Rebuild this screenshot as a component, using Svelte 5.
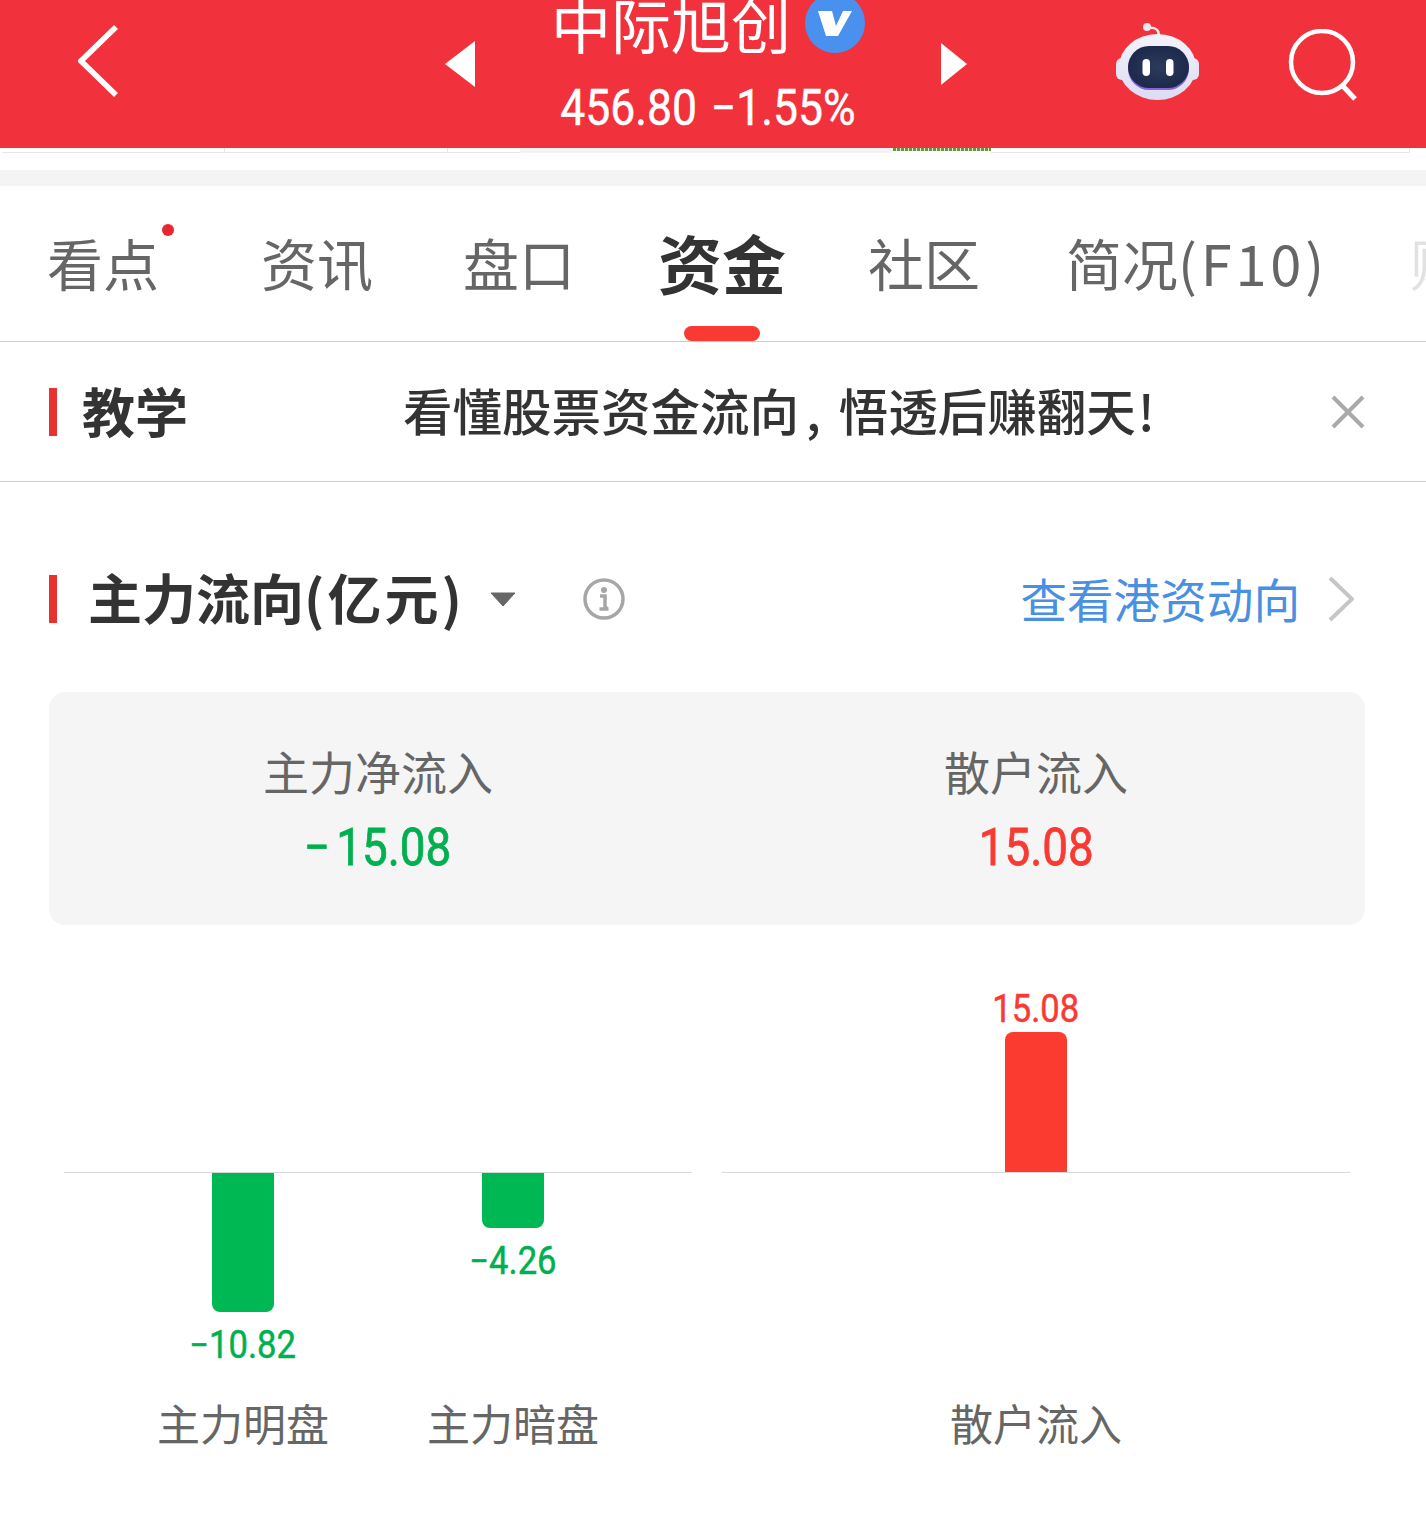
<script>
  const tabs = [
    { label: "看点", dot: true },
    { label: "资讯" },
    { label: "盘口" },
    { label: "资金", active: true },
    { label: "社区" },
    { label: "简况", suffix: "(F10)" },
    { label: "财", faded: true }
  ];

  const summary = [
    { label: "主力净流入", sign: "−", value: "15.08", tone: "down" },
    { label: "散户流入", value: "15.08", tone: "up" }
  ];

  const mainBars = [
    { name: "主力明盘", value: "−10.82", height: 139 },
    { name: "主力暗盘", value: "−4.26", height: 55 }
  ];
</script>

<div class="page">
  <header class="topbar">
    <svg class="back" viewBox="0 0 40 72" width="40" height="72">
      <path d="M38 2 L3 36 L38 70" fill="none" stroke="#fff" stroke-width="5.500" />
    </svg>
    <svg class="tri" viewBox="0 0 30 46" width="30" height="46"><path d="M30 0V46L0 23Z" fill="#fff" /></svg>
    <div class="stock">
      <div class="stock-name">
        <span>中际旭创</span>
        <svg viewBox="0 0 60 60" width="60" height="60">
          <circle cx="30" cy="30" r="30" fill="#4a90ee" />
          <path d="M13 18h14l4 15 7-15h9L33 43H21Z" fill="#fff" />
        </svg>
      </div>
      <div class="stock-quote">456.80 <span class="minus">−</span>1.55%</div>
    </div>
    <svg class="tri" viewBox="0 0 26 42" width="26" height="42"><path d="M0 0V42L26 21Z" fill="#fff" /></svg>
    <div class="actions">
      <svg viewBox="0 0 84 78" width="84" height="78">
        <defs>
          <linearGradient id="shell" x1="0" y1="0" x2="0" y2="1">
            <stop offset="0" stop-color="#f4f3fb" />
            <stop offset="1" stop-color="#dcdcf2" />
          </linearGradient>
          <radialGradient id="face">
            <stop offset="0" stop-color="#2c3a5c" />
            <stop offset="1" stop-color="#1e2a4c" />
          </radialGradient>
        </defs>
        <path d="M32 5 C40 4 43 7 43 13" fill="none" stroke="#f3e6ea" stroke-width="2.500" />
        <circle cx="31" cy="4" r="4" fill="#f0e6ee" />
        <rect x="0" y="35" width="83" height="22" rx="6" fill="#e4e4f4" />
        <ellipse cx="41.500" cy="44" rx="38.500" ry="33" fill="url(#shell)" />
        <rect x="12" y="25" width="61" height="42" rx="21" fill="#8a63d8" />
        <rect x="12" y="23" width="61" height="42" rx="21" fill="url(#face)" />
        <rect x="26.500" y="36" width="7.500" height="17" rx="3.700" fill="#fff" />
        <rect x="50" y="36" width="7.500" height="17" rx="3.700" fill="#fff" />
      </svg>
      <svg class="search" viewBox="0 0 72 72" width="72" height="72">
        <circle cx="34" cy="33" r="31" fill="none" stroke="#fff" stroke-width="4.500" />
        <path d="M54 56 L67 70" fill="none" stroke="#fff" stroke-width="5" />
      </svg>
    </div>
  </header>

  <div class="peek">
    <div class="peek-a"></div>
    <div class="peek-b"></div>
    <div class="peek-ticks"></div>
    <div class="peek-c"></div>
  </div>

  <div class="band"></div>

  <nav class="tabs">
    {#each tabs as tab}
      <div class="tab" class:active={tab.active} class:faded={tab.faded}>
        <span class="tab-label">
          {tab.label}{#if tab.suffix}<span class="suffix">{tab.suffix}</span>{/if}
          {#if tab.dot}<i class="dot"></i>{/if}
        </span>
        {#if tab.active}<i class="marker"></i>{/if}
      </div>
    {/each}
  </nav>

  <section class="lesson">
    <i class="accent"></i>
    <strong>教学</strong>
    <p>看懂股票资金流向<span class="comma">,</span>悟透后赚翻天<span class="bang">!</span></p>
    <svg viewBox="0 0 34 34" width="34" height="34">
      <path d="M2 2 L32 32 M32 2 L2 32" fill="none" stroke="#aaa" stroke-width="4" />
    </svg>
  </section>

  <section class="flow">
    <div class="flow-head">
      <i class="accent"></i>
      <h2>主力流向<span class="unit">(亿元)</span></h2>
      <svg class="caret" viewBox="0 0 26 14" width="26" height="14"><path d="M1 1H25L13 14Z" fill="#666" stroke="#666" stroke-linejoin="round" /></svg>
      <svg class="info" viewBox="0 0 42 42" width="42" height="42">
        <circle cx="21" cy="21" r="19" fill="none" stroke="#a6a6a6" stroke-width="3.500" />
        <circle cx="21" cy="12" r="3" fill="#a6a6a6" />
        <path d="M17 18h5v12h2.500M16.500 31h9" fill="none" stroke="#a6a6a6" stroke-width="3.500" />
      </svg>
      <a class="hk-link" href="#hk">查看港资动向</a>
      <svg class="more" viewBox="0 0 26 46" width="26" height="46">
        <path d="M2 2 L24 23 L2 44" fill="none" stroke="#c6c6c6" stroke-width="4" />
      </svg>
    </div>

    <div class="summary">
      {#each summary as item}
        <div class="summary-cell">
          <span>{item.label}</span>
          <b class={item.tone}>{#if item.sign}<span class="sign">{item.sign}</span>{/if}{item.value}</b>
        </div>
      {/each}
    </div>

    <div class="charts">
      <div class="chart">
        <div class="above"></div>
        <div class="axis"></div>
        <div class="below">
          {#each mainBars as bar}
            <div class="col">
              <i class="bar down-bar" style="height: {bar.height}px"></i>
              <em class="down">{bar.value}</em>
            </div>
          {/each}
        </div>
        <div class="names">
          {#each mainBars as bar}
            <span class="name">{bar.name}</span>
          {/each}
        </div>
      </div>
      <div class="chart">
        <div class="above">
          <div class="col">
            <em class="up">15.08</em>
            <i class="bar up-bar" style="height: 140px"></i>
          </div>
        </div>
        <div class="axis"></div>
        <div class="below"></div>
        <div class="names">
          <span class="name">散户流入</span>
        </div>
      </div>
    </div>
  </section>
</div>

<style>
  :global(body) {
    margin: 0;
    background: #fff;
  }

  .page {
    width: 1426px;
    height: 1522px;
    overflow: hidden;
    font-family: "Noto Sans CJK SC", "Noto Sans", sans-serif;
    color: #333;
  }

  i { display: block; font-style: normal; }

  .topbar {
    box-sizing: border-box;
    height: 148px;
    padding-bottom: 20px;
    background: #f1313b;
    display: grid;
    grid-template-columns: 445px 30px 466px 26px 1fr;
    grid-template-rows: 128px;
    align-items: center;
    overflow: hidden;
    color: #fff;
  }

  .back { margin: -6px 0 0 78px; }

  .stock {
    display: flex;
    flex-direction: column;
    align-items: center;
    align-self: start;
    margin-top: -15px;
  }

  .stock-name {
    display: flex;
    align-items: center;
    gap: 14px;
    height: 76px;
    font-size: 60px;
    line-height: 76px;
    white-space: nowrap;
  }

  .stock-quote {
    margin-top: 17px;
    font-family: Roboto, sans-serif;
    font-size: 50px;
    line-height: 60px;
    white-space: nowrap;
    -webkit-text-stroke: 0.5px #fff;
    transform: scaleX(0.89);
  }

  .minus { margin-left: 3px; }

  .actions {
    display: flex;
    align-items: center;
    gap: 88px;
    padding-left: 149px;
    margin-top: -4px;
  }

  .search { margin-top: 6px; }

  .peek {
    height: 5px;
    display: flex;
  }

  .peek-a {
    width: 518px;
    margin-left: 2px;
    box-sizing: border-box;
    border-bottom: 1px solid #e6e6e6;
    background: linear-gradient(#e6e6e6, #e6e6e6) 222px 0 / 1px 100% no-repeat,
      linear-gradient(#e6e6e6, #e6e6e6) 445px 0 / 1px 100% no-repeat;
  }

  .peek-b {
    width: 373px;
    background: #f3f3f5;
  }

  .peek-ticks {
    width: 98px;
    height: 3px;
    background: repeating-linear-gradient(90deg, #5d9b35 0 3px, #dfe8d8 3px 4px);
  }

  .peek-c {
    width: 419px;
    box-sizing: border-box;
    border-bottom: 1px solid #e6e6e6;
    border-right: 1px solid #e6e6e6;
  }

  .band {
    height: 16px;
    margin-top: 17px;
    background: #f4f4f4;
  }

  .tabs {
    height: 155px;
    display: grid;
    grid-template-columns: 214px 202px 196px 209px 198px 344px 100px;
    padding-left: 47px;
    border-bottom: 1px solid #ccc;
  }

  .tab {
    display: flex;
    flex-direction: column;
    align-items: flex-start;
    font-size: 56px;
    line-height: 70px;
    color: #666;
    padding-top: 41px;
    white-space: nowrap;
  }

  .tab-label { position: relative; }

  .suffix { letter-spacing: 3.800px; }

  .tab.active {
    color: #333;
    font-size: 64px;
    font-weight: 700;
    padding-top: 40px;
    margin-left: -1px;
  }

  .tab.faded { opacity: 0.18; }

  .marker {
    width: 76px;
    height: 15px;
    margin: auto 0 0 26px;
    border-radius: 8px;
    background: #f93a33;
  }

  .dot {
    position: absolute;
    top: -3px;
    right: -15px;
    width: 12px;
    height: 12px;
    border-radius: 50%;
    background: #e8262d;
  }

  .accent {
    width: 8px;
    height: 48px;
    background: #e83232;
    flex: none;
  }

  .lesson {
    height: 139px;
    display: flex;
    align-items: center;
    padding: 0 61px 0 49px;
    border-bottom: 1px solid #ccc;
  }

  .lesson strong {
    margin: -4px 0 0 25px;
    font-size: 53px;
    font-weight: 700;
  }

  .lesson p {
    flex: 1;
    margin: -4px 0 0 215px;
    font-size: 49.500px;
    font-weight: 500;
    white-space: nowrap;
  }

  .comma { margin: 0 18px 0 7px; }
  .bang { margin-left: 2px; }

  .flow { padding: 93px 61px 0 49px; }

  .flow-head {
    height: 48px;
    display: flex;
    align-items: center;
  }

  .flow-head h2 {
    margin: -6px 0 0 31px;
    font-size: 54px;
    font-weight: 700;
    white-space: nowrap;
  }

  .unit { letter-spacing: 3px; }

  .caret { margin-left: 25px; }
  .info { margin-left: 67px; }

  .hk-link {
    margin: -4px 0 0 auto;
    font-size: 46.600px;
    color: #4a90e2;
    text-decoration: none;
    white-space: nowrap;
  }

  .more { margin-left: 28px; margin-right: 11px; }

  .summary {
    height: 233px;
    margin-top: 69px;
    display: grid;
    grid-template-columns: 1fr 1fr;
    background: #f5f5f5;
    border-radius: 16px;
  }

  .summary-cell {
    display: flex;
    flex-direction: column;
    align-items: center;
    padding-top: 45px;
    font-size: 46px;
    line-height: 66px;
    color: #666;
  }

  .summary-cell b {
    margin-top: 12px;
    font-family: Roboto, sans-serif;
    font-size: 52px;
    font-weight: 400;
    line-height: 66px;
    -webkit-text-stroke: 0.8px currentColor;
    transform: scaleX(0.88);
  }

  .sign { margin-right: 7px; }

  .up { color: #f93a33; }
  .down { color: #00b050; }

  .charts {
    display: grid;
    grid-template-columns: 628px 628px;
    gap: 30px;
    margin-left: 15px;
  }

  .above {
    height: 247px;
    display: flex;
    align-items: flex-end;
    justify-content: center;
  }

  .axis {
    height: 1px;
    background: #d8d8d8;
  }

  .below {
    height: 219px;
    display: flex;
    justify-content: center;
  }

  .names {
    display: flex;
    justify-content: center;
  }

  .col, .name {
    width: 270px;
    text-align: center;
  }

  .col {
    display: flex;
    flex-direction: column;
    align-items: center;
  }

  .bar { width: 62px; }

  .down-bar {
    background: #00b853;
    border-radius: 0 0 8px 8px;
  }

  .up-bar {
    background: #fb3b30;
    border-radius: 8px 8px 0 0;
  }

  em {
    font-family: Roboto, sans-serif;
    font-style: normal;
    font-size: 38px;
    line-height: 46px;
    -webkit-text-stroke: 0.5px currentColor;
    transform: scaleX(0.91);
  }

  .below em { margin-top: 10px; }

  .name {
    font-size: 43px;
    line-height: 60px;
    color: #666;
    white-space: nowrap;
  }
</style>
